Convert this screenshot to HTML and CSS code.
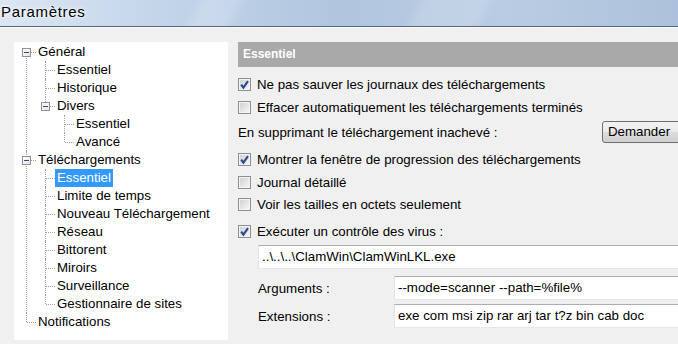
FILE: index.html
```html
<!DOCTYPE html>
<html lang="fr">
<head>
    <meta charset="UTF-8">
    <meta name="viewport" content="width=device-width, initial-scale=1.0">
    <title>Paramètres</title>

    <link rel="stylesheet" href="styles.css">
</head>
<body>
    <div class="titlebar">Paramètres</div>

    <div class="content">
        <ul class="tree">
            <li><i class="tog"></i><span>Général</span>
                <ul>
                    <li><span>Essentiel</span></li>
                    <li><span>Historique</span></li>
                    <li><i class="tog"></i><span>Divers</span>
                        <ul>
                            <li><span>Essentiel</span></li>
                            <li><span>Avancé</span></li>
                        </ul>
                    </li>
                </ul>
            </li>
            <li><i class="tog"></i><span>Téléchargements</span>
                <ul>
                    <li><span class="sel">Essentiel</span></li>
                    <li><span>Limite de temps</span></li>
                    <li><span>Nouveau Téléchargement</span></li>
                    <li><span>Réseau</span></li>
                    <li><span>Bittorent</span></li>
                    <li><span>Miroirs</span></li>
                    <li><span>Surveillance</span></li>
                    <li><span>Gestionnaire de sites</span></li>
                </ul>
            </li>
            <li><span>Notifications</span></li>
        </ul>

        <div class="panel">
            <div class="head">Essentiel</div>

            <label class="row r1"><i class="box on"><svg viewBox="0 0 11 11"><path d="M2.2 5.6 L4.4 8.6 L9 2.2"/></svg></i>Ne pas sauver les journaux des téléchargements</label>
            <label class="row r2"><i class="box"></i>Effacer automatiquement les téléchargements terminés</label>
            <div class="row r3">
                <span>En supprimant le téléchargement inachevé :</span>
                <div class="combo">Demander</div>
            </div>

            <label class="row r4"><i class="box on"><svg viewBox="0 0 11 11"><path d="M2.2 5.6 L4.4 8.6 L9 2.2"/></svg></i>Montrer la fenêtre de progression des téléchargements</label>
            <label class="row r5"><i class="box"></i>Journal détaillé</label>
            <label class="row r6"><i class="box"></i>Voir les tailles en octets seulement</label>

            <label class="row r7"><i class="box on"><svg viewBox="0 0 11 11"><path d="M2.2 5.6 L4.4 8.6 L9 2.2"/></svg></i>Exécuter un contrôle des virus :</label>
            <div class="input path">..\..\..\ClamWin\ClamWinLKL.exe</div>

            <div class="field f1">
                <span>Arguments :</span>
                <div class="input">--mode=scanner --path=%file%</div>
            </div>
            <div class="field f2">
                <span>Extensions :</span>
                <div class="input">exe com msi zip rar arj tar t?z bin cab doc</div>
            </div>
        </div>
    </div>
</body>
</html>
```

FILE: styles.css
```css
body {
    margin: 0;
    width: 678px;
    height: 344px;
    overflow: hidden;
    background: #f0f0f0;
    font-family: "Liberation Sans", Arial, sans-serif;
    font-size: 13.3px;
    color: #000;
}
.titlebar {
    height: 26px;
    line-height: 24px;
    padding-left: 1px;
    font-size: 15px;
    letter-spacing: 0.7px;
    color: #000;
    text-shadow: 0 0 6px #fff, 0 0 3px #fff;
    border-bottom: 1px solid #56657a;
    box-shadow: 0 1px 0 #fbfbfb;
    background:
        linear-gradient(115deg, transparent 0 28%, rgba(255,255,255,.18) 30% 34%, transparent 36% 60%, rgba(255,255,255,.15) 62% 70%, transparent 72%),
        linear-gradient(to right, #dbe6f3 0%, #c2d4e9 25%, #b0c6df 50%, #b9cce3 75%, #acc2dc 100%);
}
.content {
    display: flex;
    gap: 10px;
    padding: 15px 0 0 14px;
}

/* arbre */
.tree, .tree ul {
    list-style: none;
    margin: 0;
    padding: 0;
}
.tree {
    width: 214px;
    height: 297px;
    padding-top: 1px;
    background: #fff;
    flex-shrink: 0;
}
.tree ul {
    margin-left: -5px;
}
.tree li {
    position: relative;
    padding-left: 24px;
    line-height: 18px;
    white-space: nowrap;
}
.tree li:before {
    content: '';
    position: absolute;
    left: 12px;
    top: 0;
    bottom: 0;
    border-left: 1px dotted #a0a0a0;
}
.tree > li:first-child:before {
    top: 9px;
}
.tree li:last-child:before {
    bottom: auto;
    height: 9px;
}
.tree > li:first-child:last-child:before {
    display: none;
}
.tree li:after {
    content: '';
    position: absolute;
    left: 13px;
    top: 9px;
    width: 9px;
    border-top: 1px dotted #a0a0a0;
}
.tree .tog {
    position: absolute;
    left: 8px;
    top: 5px;
    width: 9px;
    height: 9px;
    box-sizing: border-box;
    border: 1px solid #919191;
    background: linear-gradient(135deg, #fff, #e4e4e4);
    z-index: 1;
}
.tree .tog:after {
    content: '';
    position: absolute;
    left: 1px;
    top: 3px;
    width: 5px;
    height: 1px;
    background: #2c4b8c;
}
.tree .sel {
    display: inline-block;
    margin-left: -2px;
    padding: 0 2px;
    background: #3399ff;
    color: #fff;
}

/* panneau */
.panel {
    width: 464px;
    flex-shrink: 0;
}
.head {
    height: 25px;
    line-height: 25px;
    padding-left: 5px;
    background: #a9a9a9;
    color: #fff;
    font-weight: bold;
    font-size: 12px;
}
.row {
    display: flex;
    align-items: center;
    height: 20px;
    white-space: nowrap;
}
.r1 { margin-top: 7px; }
.r2 { margin-top: 3px; }
.r3 { margin-top: 4px; height: 22px; }
.r4 { margin-top: 6px; }
.r5 { margin-top: 3px; }
.r6 { margin-top: 2px; }
.r7 { margin-top: 7px; }

.box {
    position: relative;
    width: 13px;
    height: 13px;
    box-sizing: border-box;
    margin-right: 6px;
    border: 1px solid #8e8f8f;
    background: linear-gradient(135deg, #cfcfcf, #f8f8f8);
    box-shadow: inset 0 0 0 1px #f4f4f4;
    flex-shrink: 0;
}
.box svg {
    position: absolute;
    left: 0;
    top: 0;
    width: 11px;
    height: 11px;
}
.box path {
    fill: none;
    stroke: #2a4790;
    stroke-width: 2.1;
}
.combo {
    margin-left: auto;
    width: 100px;
    height: 22px;
    line-height: 20px;
    box-sizing: border-box;
    padding-left: 5px;
    border: 1px solid #707070;
    border-radius: 3px;
    background: linear-gradient(#f2f2f2 0%, #ebebeb 50%, #dddddd 51%, #cfcfcf 100%);
}
.input {
    height: 24px;
    line-height: 22px;
    box-sizing: border-box;
    padding-left: 3px;
    background: #fff;
    border: 1px solid #e2e3ea;
    border-top-color: #abadb3;
    border-bottom-color: #e3e9ef;
    white-space: nowrap;
}
.path {
    margin: 4px 0 0 20px;
}
.field {
    display: grid;
    grid-template-columns: 136px 1fr;
    align-items: center;
    margin-left: 20px;
}
.f1 { margin-top: 7px; }
.f2 { margin-top: 4px; }
```
